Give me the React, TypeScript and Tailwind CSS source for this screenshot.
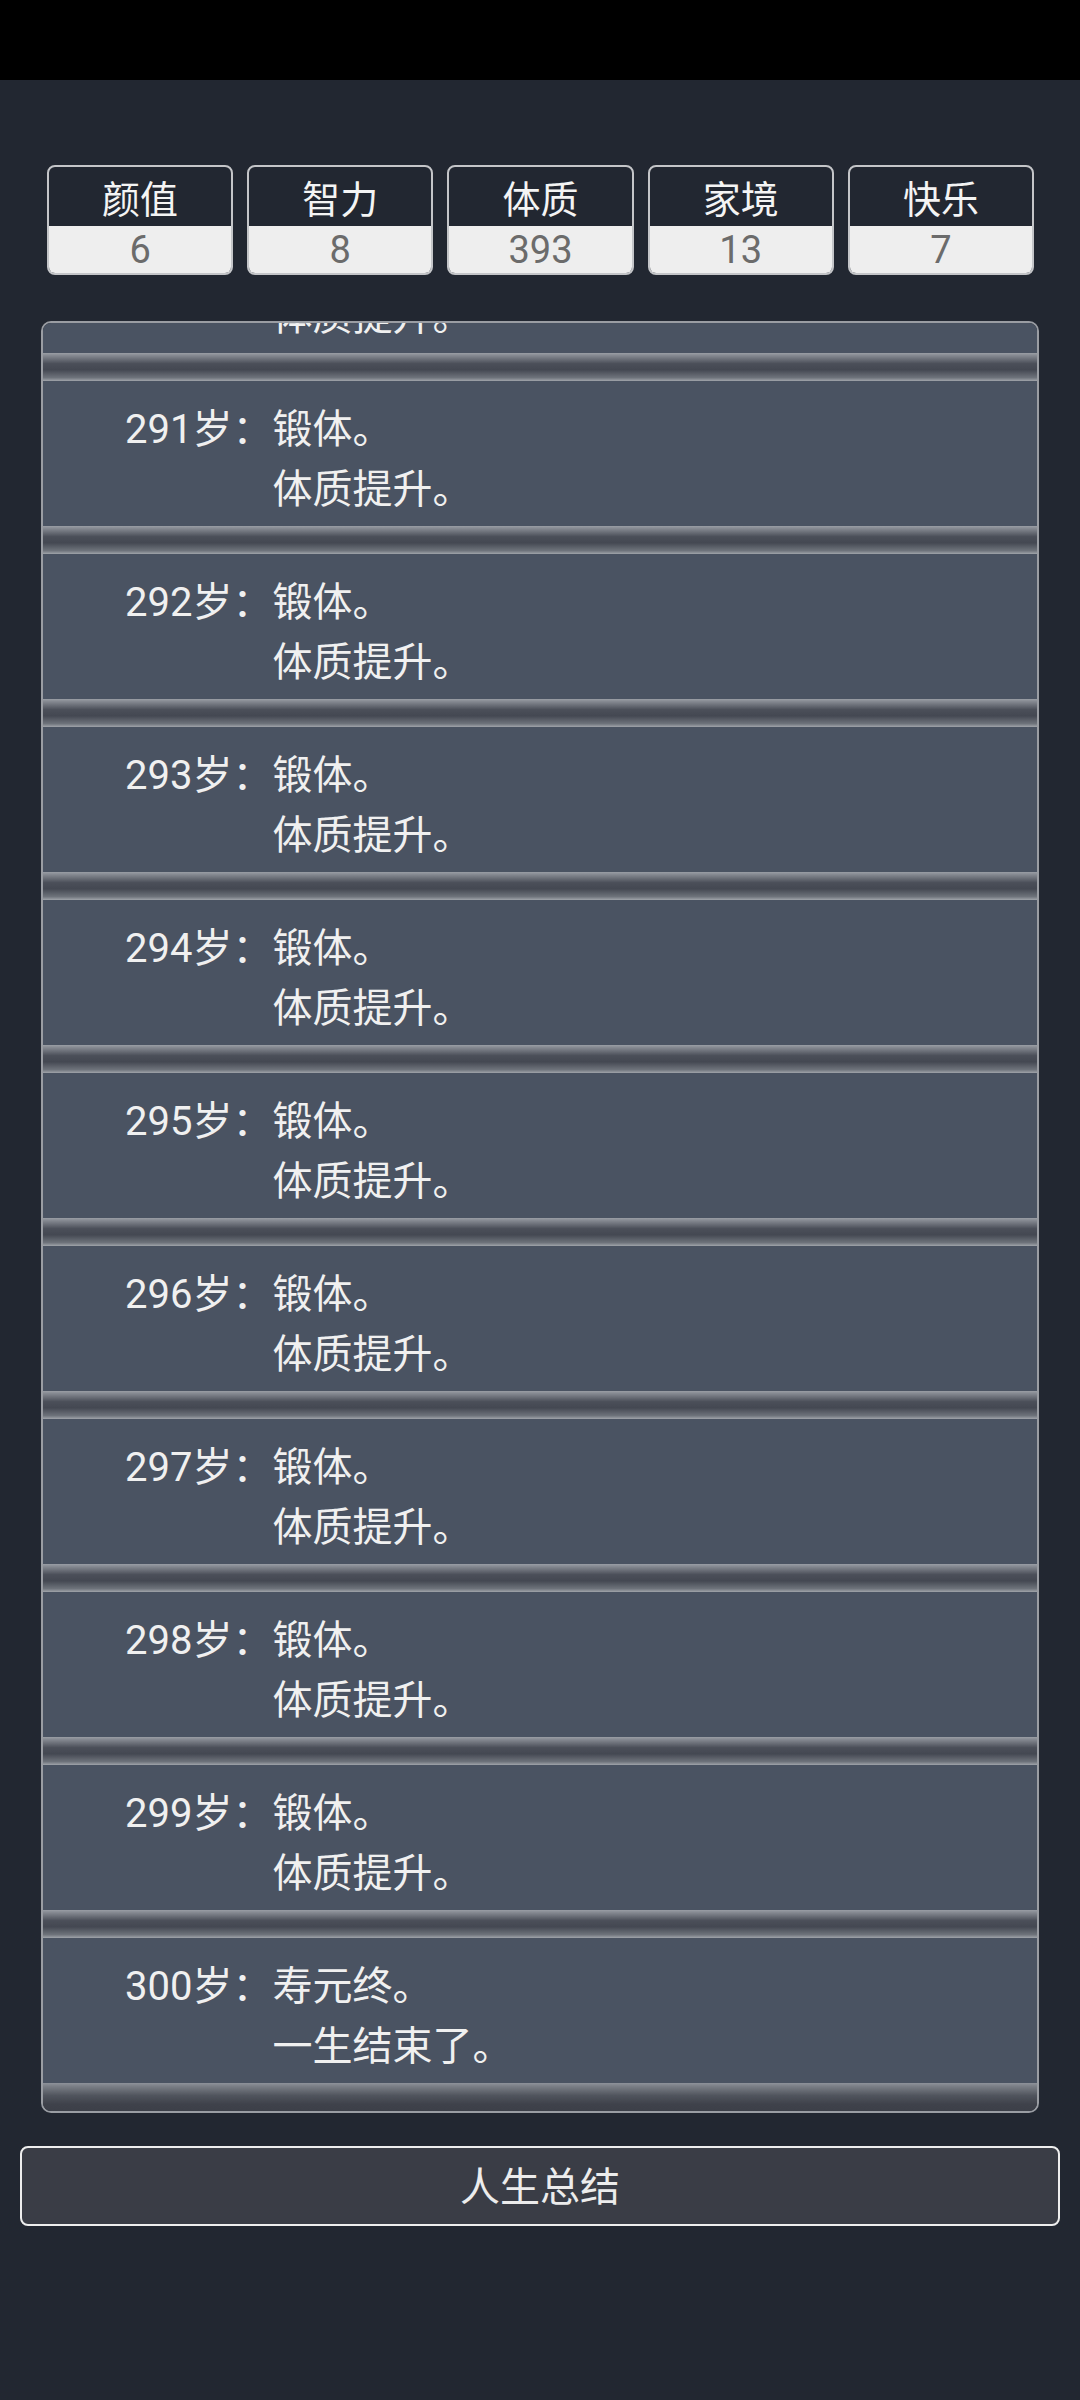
import React, { useLayoutEffect, useRef } from 'react';

interface Stat {
  label: string;
  value: number;
}

interface LogEntry {
  age: number;
  lines: string[];
}

const stats: Stat[] = [
  { label: '颜值', value: 6 },
  { label: '智力', value: 8 },
  { label: '体质', value: 393 },
  { label: '家境', value: 13 },
  { label: '快乐', value: 7 },
];

const logs: LogEntry[] = [
  ...Array.from({ length: 20 }, (_, i) => ({
    age: 280 + i,
    lines: ['锻体。', '体质提升。'],
  })),
  { age: 300, lines: ['寿元终。', '一生结束了。'] },
];

const StatBox: React.FC<{ stat: Stat }> = ({ stat }) => (
  <div className="flex flex-col overflow-hidden rounded-[8px] border-2 border-[#c4c5c8]">
    <div className="flex h-[59px] items-center justify-center pt-[6px] text-[38px] leading-[46px] text-[#f4f4f4]">
      {stat.label}
    </div>
    <div className="flex h-[47px] items-center justify-center bg-[#eeeeee] text-[38px] leading-[44px] text-[#6b6b6b]">
      {stat.value}
    </div>
  </div>
);

const Groove: React.FC<{ last?: boolean }> = ({ last }) =>
  last ? (
    <div className="h-[28px] bg-[linear-gradient(to_bottom,#8e929a_0%,#7a7e86_12%,#50545d_45%,#3f424b_75%,#3c3f48_100%)]" />
  ) : (
    <div className="h-[28px] bg-[linear-gradient(to_bottom,#9a9ea5_0%,#878b93_8%,#4b4f59_38%,#444852_60%,#6e737b_88%,#a0a4aa_100%)]" />
  );

const LogRow: React.FC<{ entry: LogEntry; last: boolean }> = ({ entry, last }) => (
  <li>
    <div className="flex pb-[6px] pl-[82px] pt-[19px] text-[40px] leading-[60px] text-[#f0f0f0]">
      <span className="shrink-0">{entry.age}岁：</span>
      <div className="flex flex-col">
        {entry.lines.map((line, i) => (
          <span key={i}>{line}</span>
        ))}
      </div>
    </div>
    <Groove last={last} />
  </li>
);

export default function App() {
  const listRef = useRef<HTMLUListElement>(null);

  // log always sits scrolled to the newest entry
  useLayoutEffect(() => {
    if (listRef.current) {
      listRef.current.scrollTop = listRef.current.scrollHeight;
    }
  }, []);

  return (
    <div className="flex min-h-screen flex-col bg-[#222731] font-['Roboto','Noto_Sans_CJK_SC',sans-serif]">
      <div className="h-[80px] bg-black" />

      <div className="mt-[85px] grid grid-cols-5 gap-[14px] pl-[47px] pr-[46px]">
        {stats.map((s) => (
          <StatBox key={s.label} stat={s} />
        ))}
      </div>

      <ul
        ref={listRef}
        className="mx-[41px] mt-[46px] h-[1792px] overflow-y-auto rounded-[10px] border-2 border-[#9a9da3] bg-[#4a5362] [scrollbar-width:none]"
      >
        {logs.map((entry, i) => (
          <LogRow key={entry.age} entry={entry} last={i === logs.length - 1} />
        ))}
      </ul>

      <button className="mx-[20px] mt-[33px] h-[80px] rounded-[8px] border-2 border-[#eeeeee] bg-[#3a3d46] pt-[4px] text-[40px] text-[#ececec]">
        人生总结
      </button>
    </div>
  );
}
